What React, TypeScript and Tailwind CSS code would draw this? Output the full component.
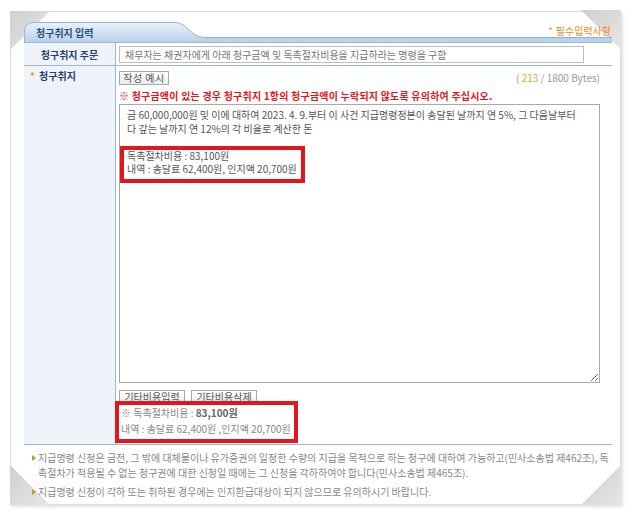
// 청구취지 입력

const claimText = [
  "금 60,000,000원 및 이에 대하여 2023. 4. 9.부터 이 사건 지급명령정본이 송달된 날까지 연 5%, 그 다음날부터",
  "다 갚는 날까지 연 12%의 각 비율로 계산한 돈",
  "",
  "독촉절차비용 : 83,100원",
  "내역 : 송달료 62,400원, 인지액 20,700원",
].join("\n")

// 종이 접힌 모서리
const Corner = ({ id, points, className }: { id: string; points: string; className: string }) => (
  <svg className={className} width="40" height="40" viewBox="0 0 40 40">
    <defs>
      <linearGradient id={id} x1="0" y1="0" x2="1" y2="1">
        <stop offset="0" stopColor="#cfcfcf" />
        <stop offset="1" stopColor="#e6e6e6" />
      </linearGradient>
    </defs>
    <polygon points={points} fill={`url(#${id})`} />
  </svg>
)

const GrayButton = ({ children, className = "" }: { children: React.ReactNode; className?: string }) => (
  <button
    className={
      "h-[14px] border border-[#a8a8a8] bg-gradient-to-b from-white to-[#ececec] text-[10px] leading-[12px] text-[#555] whitespace-nowrap " +
      className
    }
  >
    {children}
  </button>
)

const Bullet = () => (
  <span className="w-[14px] shrink-0 pl-[8px] pt-[5px]">
    <span className="block w-0 h-0 border-y-[3px] border-y-transparent border-l-[4px] border-l-[#c49a2a]"></span>
  </span>
)

const App = () => {
  return (
    <div className="min-h-[516px] bg-white pt-[11px] pl-[10px] font-['Noto_Sans_CJK_KR','Liberation_Sans',sans-serif]">
      <div className="relative w-[611px] h-[494px] border border-[#dcdcdc] bg-white pl-[13px] pr-[8px] pt-[10px] shadow-[2px_2px_3px_rgba(0,0,0,0.12)]">
        {/* 모서리 장식 */}
        <Corner id="c1" points="0,0 40,0 0,39" className="absolute -left-px -top-px" />
        <Corner id="c2" points="0,0 40,0 40,40" className="absolute -right-px -top-[2px]" />
        <Corner id="c3" points="40,0 40,40 0,40" className="absolute -right-px -bottom-px" />
        <Corner id="c4" points="0,0 0,40 40,40" className="absolute -left-px -bottom-px" />

        <div className="relative">
          {/* 탭 헤더 */}
          <div className="flex h-[21px] border-b border-[#9ab6d8]">
            <div className="w-[151px] rounded-tl-[9px] border-t border-l border-[#98b4d6] bg-gradient-to-b from-[#e9f0f8] to-[#bad0e9] pl-[11px] pt-[4px] text-[10px] leading-[12px] font-bold text-[#26507f]">
              청구취지 입력
            </div>
            <svg width="30" height="20" viewBox="0 0 30 20" className="block">
              <defs>
                <linearGradient id="tabg" x1="0" y1="0" x2="0" y2="1">
                  <stop offset="0" stopColor="#e9f0f8" />
                  <stop offset="1" stopColor="#bad0e9" />
                </linearGradient>
              </defs>
              <path d="M0,0.5 C13,0.5 15,15.5 30,15.5 L30,20 L0,20 Z" fill="url(#tabg)" />
              <path d="M0,0.5 C13,0.5 15,15.5 30,15.5" fill="none" stroke="#98b4d6" />
            </svg>
            <div className="flex-1 flex flex-col">
              <div className="flex-1 flex items-start justify-end pt-[3px] pr-[1px] text-[10px] leading-[12px] text-[#f08c1e]">
                <span className="mr-[3px] text-[9px]">*</span>필수입력사항
              </div>
              <div className="h-[5px] border-t border-[#8fb0d5] bg-[#bcd1ea]"></div>
            </div>
          </div>

          {/* 입력 표 */}
          <div className="text-[10px]">
            <div className="flex h-[23px] border-b border-[#9ab6d8]">
              <div className="w-[92px] border-r border-[#9ab6d8] bg-[#eef3fa] flex items-center justify-center font-bold text-[#1f436f]">
                청구취지 주문
              </div>
              <div className="flex-1 flex items-center pl-[3px]">
                <div className="w-[465px] h-[17px] border border-[#bdbdbd] pl-[5px] leading-[15px] text-[#777] whitespace-nowrap">
                  채무자는 채권자에게 아래 청구금액 및 독촉절차비용을 지급하라는 명령을 구함
                </div>
              </div>
            </div>

            <div className="flex border-b border-[#9ab6d8]">
              <div className="w-[92px] border-r border-[#9ab6d8] bg-[#eef3fa] pl-[6px] pt-[4px] leading-[12px] font-bold text-[#1f436f]">
                <span className="mr-[4px] text-[#f3992c]">*</span>청구취지
              </div>
              <div className="flex-1 pl-[3px] pr-[11px] pt-[5px] pb-[1px]">
                <div className="flex items-center justify-between">
                  <GrayButton className="w-[50px] tracking-[0.5px]">작성 예시</GrayButton>
                  <span className="mr-[1px] text-[#999] leading-[12px]">
                    ( <span className="text-[#f0a030]">213</span> / 1800 Bytes)
                  </span>
                </div>
                <p className="mt-[5px] leading-[12px] font-bold tracking-[0.2px] text-[#e8141c] whitespace-nowrap">
                  ※ 청구금액이 있는 경우 청구취지 1항의 청구금액이 누락되지 않도록 유의하여 주십시오.
                </p>
                <div className="relative mt-[2px]">
                  <textarea
                    readOnly
                    value={claimText}
                    className="block w-[481px] h-[279px] border border-[#a9a9a9] pl-[7px] pt-[3px] leading-[13.5px] text-[#555] whitespace-pre overflow-hidden outline-none"
                  />
                  <div className="absolute left-[1px] top-[42px] w-[185px] h-[37px] border-4 border-[#e3151d]"></div>
                </div>
                <div className="mt-[7px] flex gap-[6px]">
                  <GrayButton className="w-[66px]">기타비용입력</GrayButton>
                  <GrayButton className="w-[66px]">기타비용삭제</GrayButton>
                </div>
                <div className="relative -mt-[3px] -ml-[4px] w-[183px] h-[42px] border-4 border-[#e3151d] pl-[2px] leading-[16px] text-[#888] whitespace-nowrap">
                  <p>
                    ※ 독촉절차비용 : <b className="text-[#666]">83,100원</b>
                  </p>
                  <p>내역 : 송달료 62,400원 ,인지액 20,700원</p>
                </div>
              </div>
            </div>
          </div>

          {/* 안내 문구 */}
          <div className="mt-[5px] text-[10px] leading-[15px] text-[#888]">
            <div className="flex">
              <Bullet />
              <p className="whitespace-nowrap">
                지급명령 신청은 금전, 그 밖에 대체물이나 유가증권의 일정한 수량의 지급을 목적으로 하는 청구에 대하여 가능하고(민사소송법 제462조), 독
                <br />
                촉절차가 적용될 수 없는 청구권에 대한 신청일 때에는 그 신청을 각하하여야 합니다(민사소송법 제465조).
              </p>
            </div>
            <div className="mt-[4px] flex">
              <Bullet />
              <p className="whitespace-nowrap">지급명령 신청이 각하 또는 취하된 경우에는 인지환급대상이 되지 않으므로 유의하시기 바랍니다.</p>
            </div>
          </div>
        </div>
      </div>
    </div>
  )
}

export default App
